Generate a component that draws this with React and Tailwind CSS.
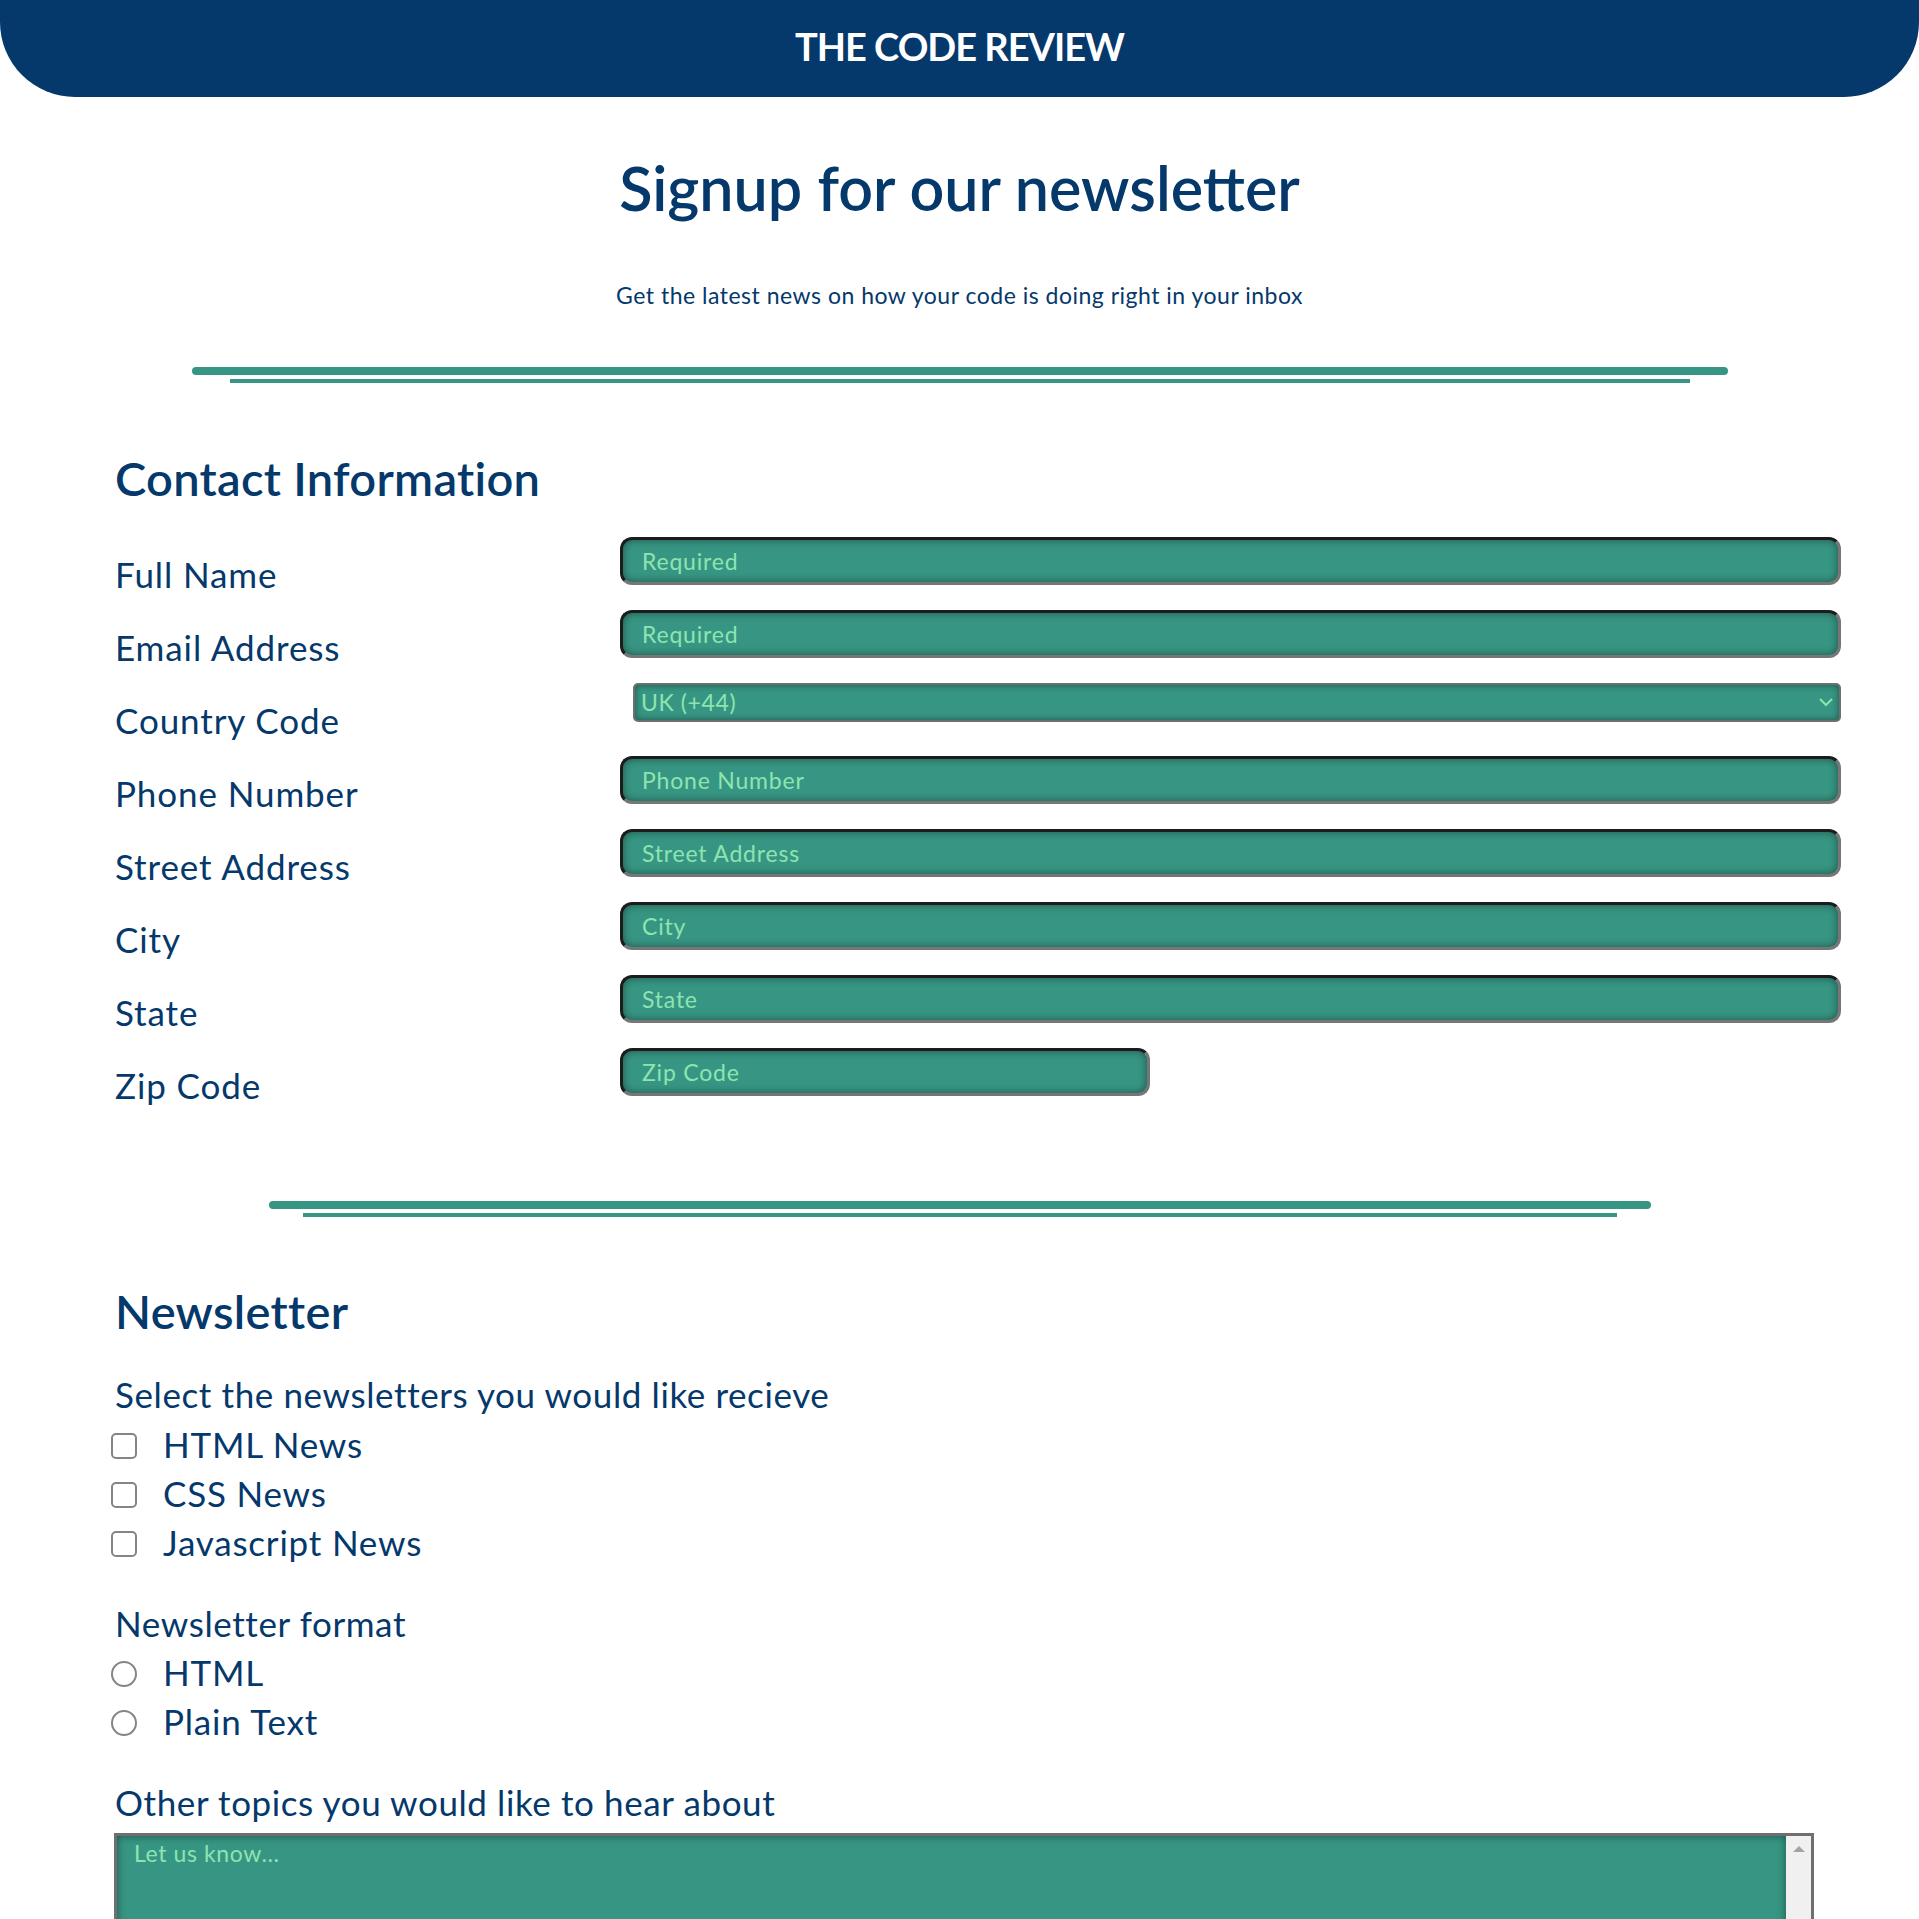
import { useState } from 'react'

const font = "font-['Lato',sans-serif]"

const fields = [
  { label: 'Full Name', placeholder: 'Required' },
  { label: 'Email Address', placeholder: 'Required' },
  { label: 'Country Code', select: true },
  { label: 'Phone Number', placeholder: 'Phone Number' },
  { label: 'Street Address', placeholder: 'Street Address' },
  { label: 'City', placeholder: 'City' },
  { label: 'State', placeholder: 'State' },
  { label: 'Zip Code', placeholder: 'Zip Code', short: true },
]

function Divider({ wide, narrow }) {
  return (
    <div className="flex flex-col items-center gap-[4px]">
      <div className={`${wide} h-[8px] rounded-full bg-[#379683]`} />
      <div className={`${narrow} h-[4px] bg-[#379683]`} />
    </div>
  )
}

function Field({ f }) {
  if (f.select) {
    return (
      <div className="relative ml-[13px] flex-1">
        <select className="w-full h-[39px] appearance-none rounded-[5px] border-2 border-[#6f6f6f] bg-[#379683] pl-[6px] text-[23px] tracking-[0.6px] text-[#8EE4AF] shadow-[inset_0_0_7px_rgba(0,0,0,0.45)] outline-none">
          <option>UK (+44)</option>
          <option>US (+1)</option>
        </select>
        <svg className="absolute right-[8px] top-[14px] w-[14px] h-[10px] pointer-events-none" viewBox="0 0 14 10" fill="none" stroke="#8EE4AF" strokeWidth="2"><path d="M1 2l6 6 6-6" /></svg>
      </div>
    )
  }
  return (
    <input
      placeholder={f.placeholder}
      className={`${f.short ? 'w-[530px]' : 'flex-1'} h-[48px] rounded-[12px] border-[3px] border-t-[#1c1c1c] border-l-[#1c1c1c] border-b-[#767676] border-r-[#767676] bg-[#379683] px-[19px] text-[23px] tracking-[0.8px] text-[#8EE4AF] placeholder:text-[#8EE4AF] shadow-[inset_0_0_8px_rgba(0,0,0,0.45)] outline-none`}
    />
  )
}

function Check({ type, label, name }) {
  const [on, setOn] = useState(false)
  return (
    <label className="flex items-center gap-[26px] cursor-pointer">
      <input
        type={type}
        name={name}
        checked={on}
        onChange={() => setOn(!on)}
        className={`appearance-none w-[26px] h-[26px] border-2 border-[#858585] bg-white ml-[-4px] mt-[3px] ${type === 'radio' ? 'rounded-full' : 'rounded-[5px]'} checked:bg-[#379683]`}
      />
      <span className="text-[35px] tracking-[0.8px] leading-[41px]">{label}</span>
    </label>
  )
}

export default function App() {
  return (
    <div className={`${font} min-h-screen bg-white text-[#05386B]`}>
      <header className="h-[97px] pb-[5px] bg-[#05386B] rounded-b-[75px] flex items-center justify-center">
        <h3 className="text-white text-[38px] font-bold tracking-[-1px] leading-none">THE CODE REVIEW</h3>
      </header>

      <h1 className="mt-[55px] text-center text-[61px] leading-[72px] font-semibold">Signup for our newsletter</h1>
      <p className="mt-[55px] text-center text-[23px] tracking-[0.5px] leading-[32px]">Get the latest news on how your code is doing right in your inbox</p>

      <div className="mt-[56px]">
        <Divider wide="w-[1536px]" narrow="w-[1460px]" />
      </div>

      <section className="pl-[115px] pr-[78px]">
        <h2 className="mt-[68px] text-[47px] tracking-[0.3px] leading-[55px] font-semibold">Contact Information</h2>
        <div className="mt-[31px] flex flex-col gap-[13px]">
          {fields.map(f => (
            <div key={f.label} className="flex items-start">
              <label className="w-[505px] mt-[16px] mb-[2px] text-[35px] tracking-[0.9px] leading-[42px]">{f.label}</label>
              <Field f={f} />
            </div>
          ))}
        </div>
      </section>

      <div className="mt-[93px]">
        <Divider wide="w-[1382px]" narrow="w-[1314px]" />
      </div>

      <section className="pl-[115px] pb-[40px]">
        <h2 className="mt-[67px] text-[47px] tracking-[0.3px] leading-[55px] font-semibold">Newsletter</h2>
        <p className="mt-[35px] text-[35px] tracking-[0.6px] leading-[41px]">Select the newsletters you would like recieve</p>
        <div className="mt-[9px] flex flex-col gap-[8px]">
          <Check type="checkbox" label="HTML News" />
          <Check type="checkbox" label="CSS News" />
          <Check type="checkbox" label="Javascript News" />
        </div>

        <p className="mt-[40px] text-[35px] tracking-[0.6px] leading-[41px]">Newsletter format</p>
        <div className="mt-[8px] flex flex-col gap-[8px]">
          <Check type="radio" name="format" label="HTML" />
          <Check type="radio" name="format" label="Plain Text" />
        </div>

        <p className="mt-[40px] text-[35px] tracking-[0.6px] leading-[41px]">Other topics you would like to hear about</p>
        <div className="mt-[10px] ml-[-1px] w-[1700px] h-[160px] flex border-[3px] border-[#6f6f6f]">
          <textarea
            placeholder="Let us know..."
            className="flex-1 resize-none bg-[#379683] px-[17px] pt-[3px] text-[23px] tracking-[0.6px] leading-[29px] text-[#8EE4AF] placeholder:text-[#8EE4AF] shadow-[inset_0_0_8px_rgba(0,0,0,0.45)] outline-none"
          />
          <div className="w-[25px] bg-[#f0f0f0] flex justify-center pt-[10px]">
            <span className="block w-0 h-0 border-l-[6px] border-r-[6px] border-b-[6px] border-l-transparent border-r-transparent border-b-[#a3a3a3]" />
          </div>
        </div>
      </section>
    </div>
  )
}
